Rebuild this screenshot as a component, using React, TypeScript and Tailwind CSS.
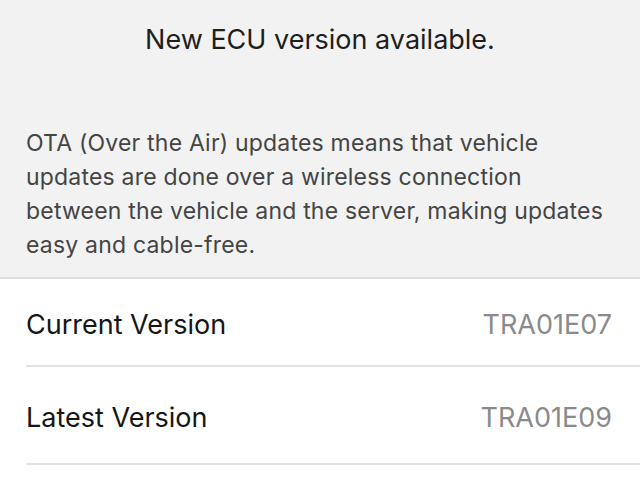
const rows = [
  { label: 'Current Version', value: 'TRA01E07', height: 'h-[88px]' },
  { label: 'Latest Version', value: 'TRA01E09', height: 'h-[98px]' },
]

export default function App() {
  return (
    <div className="w-[640px] h-[488px] bg-white flex flex-col overflow-hidden font-['Inter',sans-serif]">
      <section className="bg-[#f2f2f2] border-b-2 border-[#dcdcdc]">
        <h1 className="text-center text-[27px] leading-[32px] text-[#1e1e1e] pt-[24px]">New ECU version available.</h1>
        <p className="pl-[26px] pr-[34px] pt-[70px] pb-[15px] text-[23px] tracking-[0.2px] leading-[34px] text-[#444444]">
          OTA (Over the Air) updates means that vehicle updates are done over a wireless connection between the
          vehicle and the server, making updates easy and cable-free.
        </p>
      </section>
      <div className="pl-[26px]">
        {rows.map((r) => (
          <div
            key={r.label}
            className={`${r.height} flex items-center justify-between pt-[6px] pr-[28px] border-b-2 border-[#e2e2e2]`}
          >
            <span className="text-[27px] text-[#151515]">{r.label}</span>
            <span className="text-[27px] text-[#8a8a8a]">{r.value}</span>
          </div>
        ))}
      </div>
    </div>
  )
}
